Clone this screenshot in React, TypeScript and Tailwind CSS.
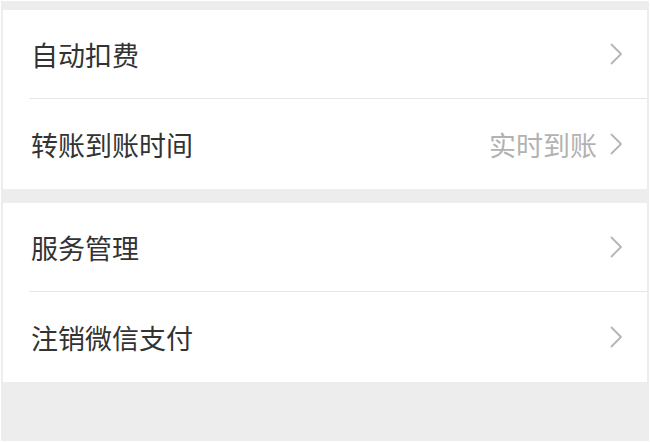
import React from 'react';

interface Row {
    label: string;
    value?: string;
}

const groups: Row[][] = [
    [{ label: '自动扣费' }, { label: '转账到账时间', value: '实时到账' }],
    [{ label: '服务管理' }, { label: '注销微信支付' }],
];

const Chevron = () => (
    <svg width="14" height="22" viewBox="0 0 14 22" fill="none" className="shrink-0">
        <polyline points="2.5,1.5 12,11 2.5,20.5" stroke="#b5b5b5" strokeWidth="1.8" strokeLinecap="round" strokeLinejoin="round" />
    </svg>
);

const SettingRow: React.FC<{ row: Row; last: boolean }> = ({ row, last }) => (
    <div className="pl-[26px] bg-white">
        <div className={`flex items-center h-[89px] pr-[24px] ${last ? 'h-[90px]' : 'border-b border-[#e6e6e6]'}`}>
            <span className="flex-1 pl-[2px] text-[27px] text-[#333333] leading-none">{row.label}</span>
            {row.value && (
                <span className="text-[27px] text-[#b2b2b2] leading-none mr-[12px]">{row.value}</span>
            )}
            <Chevron />
        </div>
    </div>
);

export default function App() {
    return (
        <div
            className="w-[650px] h-[442px] bg-white p-px"
            style={{ fontFamily: '"Noto Sans CJK SC", "Noto Sans", sans-serif' }}
        >
            <div className="h-full bg-[#ededed] pt-[9px] px-[2px] flex flex-col gap-[14px]">
                {groups.map((group, gi) => (
                    <div key={gi} className="flex flex-col">
                        {group.map((row, ri) => (
                            <SettingRow key={row.label} row={row} last={ri === group.length - 1} />
                        ))}
                    </div>
                ))}
            </div>
        </div>
    );
}
